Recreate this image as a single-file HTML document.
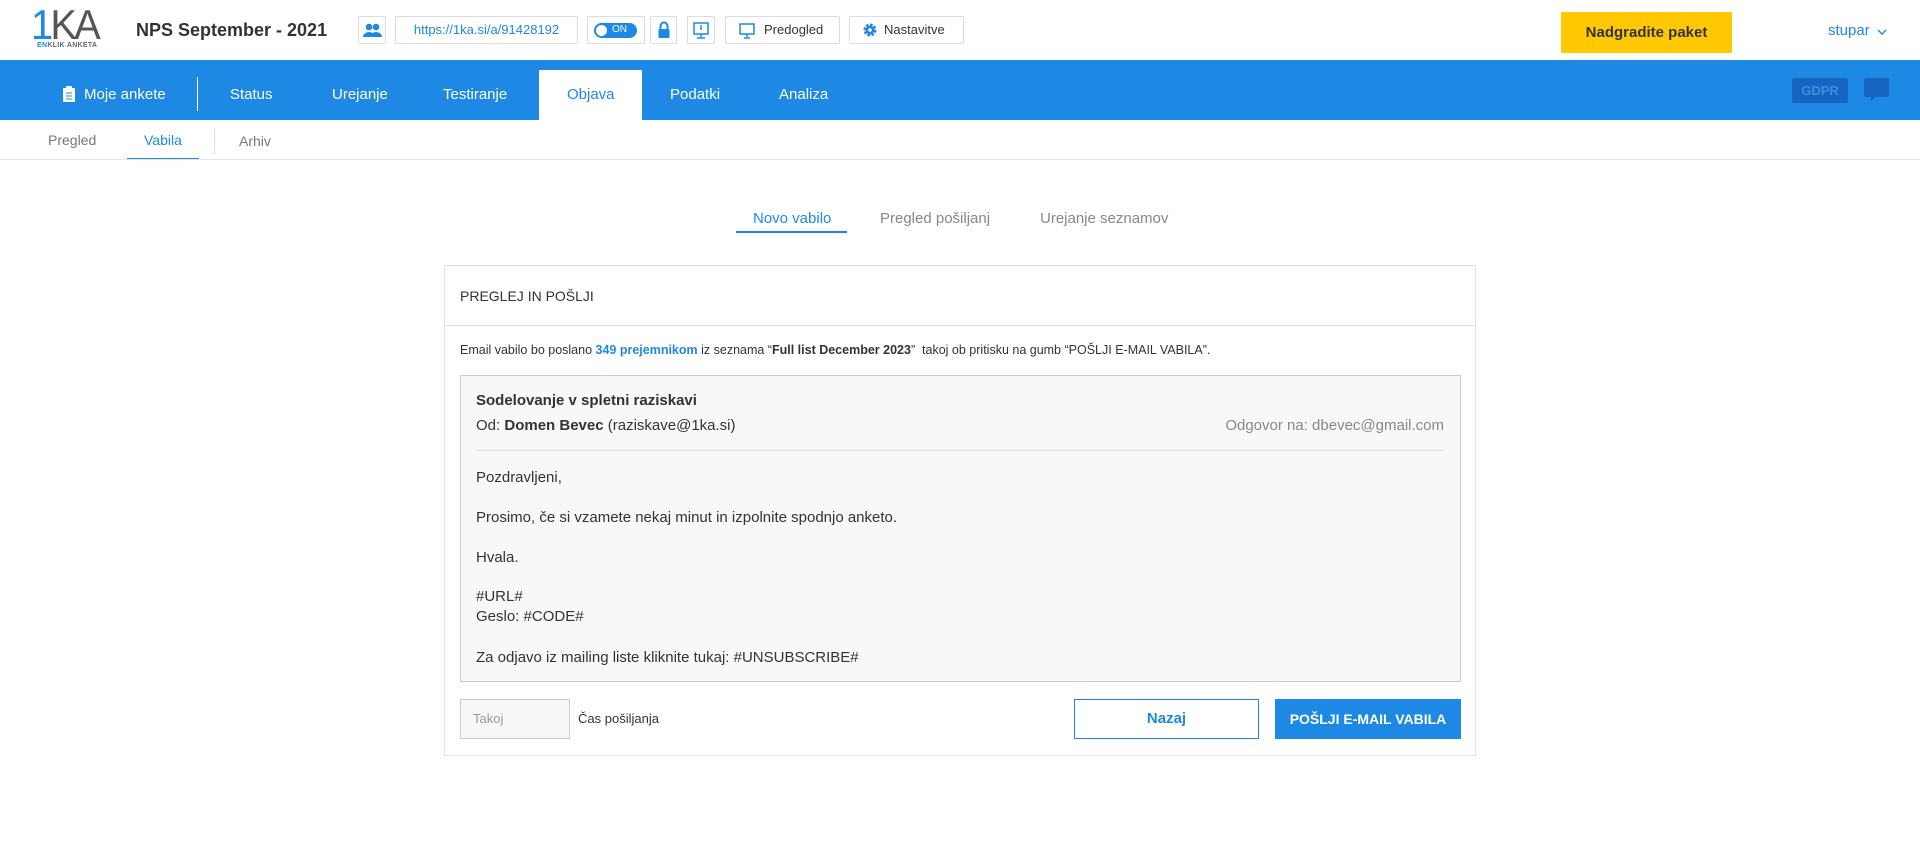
<!DOCTYPE html>
<html><head><meta charset="utf-8">
<style>
*{box-sizing:border-box;margin:0;padding:0}
body{width:1920px;height:850px;background:#fff;font-family:"Liberation Sans",sans-serif;color:#333;position:relative;overflow:hidden}
.a{position:absolute;white-space:nowrap}
.box{position:absolute;border:1px solid #ddd;border-radius:2px;background:#fff;height:28px;top:16px}
.nav{color:#fff;font-size:15px;top:86px}
.em{font-size:15px;color:#333;left:476px}
</style></head><body>
<!-- logo -->
<div class="a" style="left:31px;top:4px;font-size:42px;letter-spacing:-3px;color:#555;line-height:42px;transform:scaleX(0.95);transform-origin:left"><span style="color:#1e88e5">1</span>KA</div>
<div class="a" style="left:37px;top:42px;font-size:7px;font-weight:bold;color:#666;letter-spacing:0.3px"><span style="color:#1e88e5">EN</span>KLIK ANKETA</div>
<div class="a" style="left:136px;top:20px;font-size:18px;font-weight:bold;color:#333">NPS September - 2021</div>
<div class="box" style="left:358px;width:28px"><svg width="26" height="26" viewBox="0 0 26 26" style="position:absolute;left:0;top:0"><circle cx="10" cy="10" r="3.3" fill="#1e88e5"/><circle cx="17" cy="10" r="3.3" fill="#1e88e5"/><path d="M4 20a6 5 0 0 1 12 0z M11 20a6 5 0 0 1 12 0z" fill="#1e88e5"/></svg></div>
<div class="box" style="left:395px;width:183px;color:#1e88e5;font-size:13px;text-align:center;line-height:26px">https://1ka.si/a/91428192</div>
<div class="box" style="left:587px;width:58px"><div style="position:absolute;left:6px;top:6px;width:43px;height:15px;border-radius:8px;background:#1e88e5"><div style="position:absolute;left:2px;top:2px;width:11px;height:11px;border-radius:50%;background:#fff"></div><span style="position:absolute;left:18px;top:1px;color:#fff;font-size:10px">ON</span></div></div>
<div class="box" style="left:650px;width:27px"><svg width="26" height="26" style="position:absolute;left:0;top:0"><path d="M9.5 12V9a3.5 3.5 0 0 1 7 0v3" stroke="#1e88e5" stroke-width="2" fill="none"/><rect x="7.5" y="12" width="11" height="9" rx="1" fill="#1e88e5"/></svg></div>
<div class="box" style="left:687px;width:28px"><svg width="26" height="26" style="position:absolute;left:0;top:0"><rect x="6" y="6" width="14" height="11" fill="none" stroke="#1e88e5" stroke-width="1.5"/><path d="M13 8v5M13 17v3M9 21h8" stroke="#1e88e5" stroke-width="1.5"/></svg></div>
<div class="box" style="left:725px;width:115px;font-size:13px;line-height:26px"><svg width="20" height="20" style="position:absolute;left:12px;top:4px"><rect x="2" y="3" width="14" height="10" fill="none" stroke="#1e88e5" stroke-width="1.5"/><path d="M9 13v3M6 17h6" stroke="#1e88e5" stroke-width="1.5"/></svg><span style="position:absolute;left:38px">Predogled</span></div>
<div class="box" style="left:849px;width:115px;font-size:13px;line-height:26px"><svg width="20" height="20" style="position:absolute;left:12px;top:5px"><circle cx="8" cy="8" r="5" fill="none" stroke="#1e88e5" stroke-width="3" stroke-dasharray="2.5 1.4"/><circle cx="8" cy="8" r="4.5" fill="#1e88e5"/><circle cx="8" cy="8" r="1.8" fill="#fff"/></svg><span style="position:absolute;left:34px">Nastavitve</span></div>
<div class="a" style="left:1561px;top:12px;width:171px;height:41px;background:#ffc800;color:#333;font-size:15px;font-weight:bold;text-align:center;line-height:41px">Nadgradite paket</div>
<div class="a" style="left:1828px;top:22px;font-size:15px;color:#1e88e5">stupar</div>
<svg class="a" style="left:1876px;top:28px" width="12" height="8"><path d="M2 2l4 4 4-4" stroke="#1e88e5" stroke-width="1.4" fill="none"/></svg>
<!-- blue nav -->
<div class="a" style="left:0;top:60px;width:1920px;height:60px;background:#1e88e5"></div>
<svg class="a" style="left:63px;top:86px" width="12" height="16"><rect x="0" y="2" width="12" height="14" rx="1" fill="#fff"/><rect x="3" y="0" width="6" height="4" rx="1" fill="#fff"/><path d="M3 7h6M3 10h6M3 13h6" stroke="#1e88e5" stroke-width="1"/></svg>
<div class="a nav" style="left:84px">Moje ankete</div>
<div class="a" style="left:197px;top:77px;width:1px;height:34px;background:#fff"></div>
<div class="a nav" style="left:230px">Status</div>
<div class="a nav" style="left:332px">Urejanje</div>
<div class="a nav" style="left:443px">Testiranje</div>
<div class="a" style="left:539px;top:70px;width:103px;height:50px;background:#fff"></div>
<div class="a nav" style="left:567px;color:#1e88e5">Objava</div>
<div class="a nav" style="left:670px">Podatki</div>
<div class="a nav" style="left:779px">Analiza</div>
<div class="a" style="left:1792px;top:78px;width:56px;height:25px;background:#1565c0;color:#3b8fe0;font-size:13px;font-weight:bold;text-align:center;line-height:25px;border-radius:2px">GDPR</div>
<svg class="a" style="left:1864px;top:78px" width="25" height="24"><path d="M2 0h21a2 2 0 0 1 2 2v15a2 2 0 0 1-2 2h-12l-4 4v-4h-5a2 2 0 0 1-2-2v-15a2 2 0 0 1 2-2z" fill="#1565c0"/></svg>
<!-- subbar -->
<div class="a" style="left:48px;top:132px;font-size:14px;color:#777">Pregled</div>
<div class="a" style="left:144px;top:132px;font-size:14px;color:#1e88e5">Vabila</div>
<div class="a" style="left:127px;top:158px;width:72px;height:2px;background:#1e88e5"></div>
<div class="a" style="left:214px;top:129px;width:1px;height:25px;background:#ddd"></div>
<div class="a" style="left:239px;top:133px;font-size:14px;color:#777">Arhiv</div>
<div class="a" style="left:0;top:159px;width:1920px;height:1px;background:#e5e5e5"></div>
<!-- tabs -->
<div class="a" style="left:753px;top:210px;font-size:15px;color:#1e88e5">Novo vabilo</div>
<div class="a" style="left:736px;top:231px;width:111px;height:2px;background:#1e88e5"></div>
<div class="a" style="left:880px;top:210px;font-size:15px;color:#888">Pregled pošiljanj</div>
<div class="a" style="left:1040px;top:210px;font-size:15px;color:#888">Urejanje seznamov</div>
<!-- card -->
<div class="a" style="left:444px;top:265px;width:1032px;height:491px;border:1px solid #e2e2e2"></div>
<div class="a" style="left:460px;top:288px;font-size:14px;color:#333">PREGLEJ IN POŠLJI</div>
<div class="a" style="left:445px;top:325px;width:1030px;height:1px;background:#e2e2e2"></div>
<div class="a" style="left:460px;top:343px;font-size:12.5px;color:#333">Email vabilo bo poslano <b style="color:#1e88e5">349 prejemnikom</b> iz seznama “<b>Full list December 2023</b>”&nbsp; takoj ob pritisku na gumb “POŠLJI E-MAIL VABILA”.</div>
<div class="a" style="left:460px;top:375px;width:1001px;height:307px;background:#f8f8f8;border:1px solid #ccc"></div>
<div class="a em" style="top:392px;font-weight:bold">Sodelovanje v spletni raziskavi</div>
<div class="a em" style="top:417px">Od: <b>Domen Bevec</b> (raziskave@1ka.si)</div>
<div class="a em" style="top:417px;left:auto;right:476px;color:#888">Odgovor na: dbevec@gmail.com</div>
<div class="a" style="left:476px;top:450px;width:968px;height:1px;background:#ddd"></div>
<div class="a em" style="top:469px">Pozdravljeni,</div>
<div class="a em" style="top:509px">Prosimo, če si vzamete nekaj minut in izpolnite spodnjo anketo.</div>
<div class="a em" style="top:549px">Hvala.</div>
<div class="a em" style="top:588px">#URL#</div>
<div class="a em" style="top:608px">Geslo: #CODE#</div>
<div class="a em" style="top:649px">Za odjavo iz mailing liste kliknite tukaj: #UNSUBSCRIBE#</div>
<div class="a" style="left:460px;top:699px;width:110px;height:40px;background:#f8f8f8;border:1px solid #ccc;font-size:13px;color:#999;line-height:38px;padding-left:12px">Takoj</div>
<div class="a" style="left:578px;top:711px;font-size:13px;color:#333">Čas pošiljanja</div>
<div class="a" style="left:1074px;top:699px;width:185px;height:40px;border:1px solid #1e88e5;color:#1e88e5;font-size:15px;font-weight:bold;text-align:center;line-height:38px">Nazaj</div>
<div class="a" style="left:1275px;top:699px;width:186px;height:40px;background:#1e88e5;color:#fff;font-size:14px;font-weight:bold;text-align:center;line-height:40px">POŠLJI E-MAIL VABILA</div>
</body></html>
